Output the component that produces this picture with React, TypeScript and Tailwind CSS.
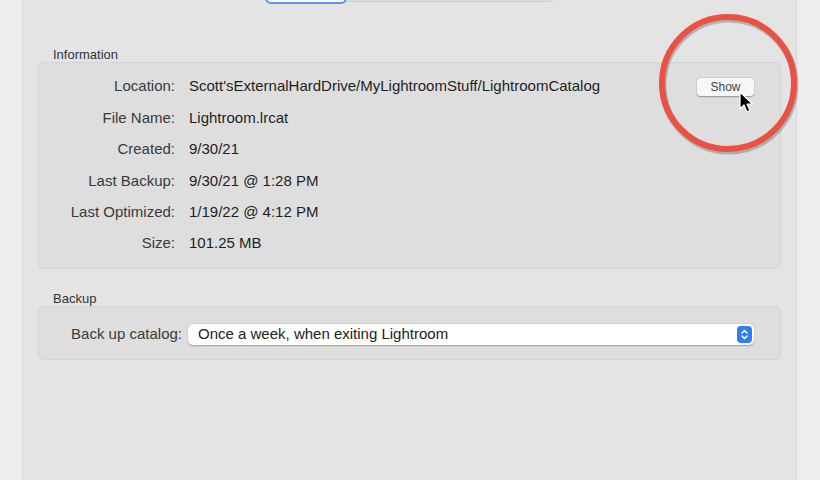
import React from "react";

const rows = [
  { label: "Location:", value: "Scott'sExternalHardDrive/MyLightroomStuff/LightroomCatalog", show: true },
  { label: "File Name:", value: "Lightroom.lrcat" },
  { label: "Created:", value: "9/30/21" },
  { label: "Last Backup:", value: "9/30/21 @ 1:28 PM" },
  { label: "Last Optimized:", value: "1/19/22 @ 4:12 PM" },
  { label: "Size:", value: "101.25 MB" },
];

const Stepper = () => (
  <div className="w-[15px] h-[17px] rounded-[4px] bg-[#2f7ff2] flex items-center justify-center">
    <svg width="9" height="13" viewBox="0 0 9 13" fill="none" stroke="white" strokeWidth="1.6" strokeLinecap="round" strokeLinejoin="round">
      <path d="M2 5 L4.5 2.5 L7 5" />
      <path d="M2 8 L4.5 10.5 L7 8" />
    </svg>
  </div>
);

const Cursor = () => (
  <svg width="16" height="24" viewBox="0 0 16 24" className="absolute left-[739px] top-[91px]">
    <path d="M1 1 L1 18 L5 14 L8 21 L11 19.6 L8 13 L13.5 13 Z" fill="black" stroke="white" strokeWidth="1.2" strokeLinejoin="round" />
  </svg>
);

const Highlight = () => (
  <svg width="160" height="160" viewBox="0 0 160 160" className="absolute left-[648px] top-[5px]">
    <circle cx="81" cy="80" r="66" fill="none" stroke="#555" strokeOpacity="0.35" strokeWidth="7" />
    <circle cx="80" cy="78" r="66" fill="none" stroke="#ea5142" strokeWidth="6" />
  </svg>
);

export default function App() {
  return (
    <div className="relative flex w-[820px] h-[480px] bg-[#ededed] text-[#2a2a2a] font-['Liberation_Sans',Arial,sans-serif] overflow-hidden">
      <div className="w-[22px] shrink-0" />

      {/* Main preferences panel */}
      <div className="w-[775px] shrink-0 bg-[#e4e4e4] border-x border-[#d8d8d8] flex flex-col">
        {/* Tab switcher, cut off at the top */}
        <div className="flex h-[22px] -mt-[18px] ml-[242px]">
          <div className="w-[82px] h-full rounded-[6px] bg-white border-2 border-[#5f93ef]" />
          <div className="w-[208px] h-[20px] rounded-br-[6px] bg-[#dcdcdc] border border-[#d0d0d0] border-l-0 relative">
            <div className="absolute left-[96px] bottom-[1px] w-[2px] h-[2px] rounded-full bg-[#888]" />
          </div>
        </div>

        <div className="px-[15px]">
          <div className="mt-[44px] pl-[15px] text-[13px] leading-[13px] text-[#333]">Information</div>
          <div className="mt-[1px] rounded-[6px] bg-[#dedede] border border-[#d4d4d4] pt-[8px] pb-[9px]">
            {rows.map((r) => (
              <div key={r.label} className="grid grid-cols-[136px_1fr] gap-x-[14px] h-[31.4px] items-center text-[15px]">
                <div className="text-right text-[#3a3a3a]">{r.label}</div>
                <div className="flex items-center justify-between pr-[26px]">
                  <span className="text-[#1e1e1e]">{r.value}</span>
                  {r.show && (
                    <button className="w-[57px] h-[18px] rounded-[4px] bg-[#f7f7f7] shadow-[0_0.5px_1.5px_rgba(0,0,0,0.35)] text-[12px] leading-[18px] text-[#444]">
                      Show
                    </button>
                  )}
                </div>
              </div>
            ))}
          </div>

          <div className="mt-[23px] pl-[15px] text-[13px] leading-[13px] text-[#333]">Backup</div>
          <div className="mt-[1px] rounded-[6px] bg-[#dedede] border border-[#d4d4d4] pt-[16px] pb-[13px] flex items-center">
            <div className="w-[143px] text-right text-[15px] text-[#3a3a3a]">Back up catalog:</div>
            <div className="ml-[6px] mr-[26px] flex-1 h-[21px] rounded-[5px] bg-white shadow-[0_0.5px_1.5px_rgba(0,0,0,0.3)] flex items-center justify-between pl-[10px] pr-[2px]">
              <span className="text-[15px] text-[#222]">Once a week, when exiting Lightroom</span>
              <Stepper />
            </div>
          </div>
        </div>
      </div>

      <div className="flex-1" />

      <Highlight />
      <Cursor />
    </div>
  );
}
